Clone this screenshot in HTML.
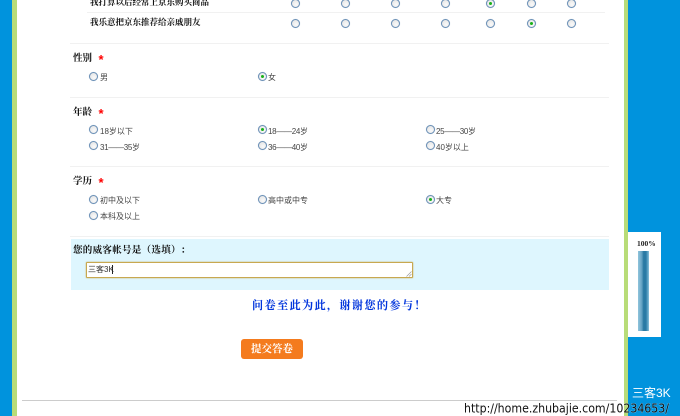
<!DOCTYPE html>
<html lang="zh"><head><meta charset="utf-8"><style>
html,body{margin:0;padding:0}
body{width:680px;height:416px;overflow:hidden;position:relative;background:#0093dd;font-family:"Liberation Serif","Noto Serif CJK SC",serif;text-spacing-trim:space-all}
div,span,i{position:absolute;display:block;white-space:nowrap}
.bl{font-family:"Noto Serif CJK SC","Liberation Serif",serif;filter:blur(.25px)}
.q{font-size:8.5px;font-weight:700;color:#111;line-height:12px;left:90px}
.h{font-size:9.5px;font-weight:700;color:#111;line-height:12px;left:73px}
.s{font-family:"Liberation Sans",sans-serif;font-size:13px;font-weight:700;color:#f00;line-height:12px;left:98.5px;filter:blur(.2px)}
.o{font-size:8px;color:#444;line-height:10px;font-family:"WenQuanYi Zen Hei","Liberation Sans",sans-serif;filter:blur(.25px)}
.d{letter-spacing:-.3px}
.l{height:1px;background:#f1f1f1}
.r{width:7px;height:7px;border:1px solid #6a8fb6;border-radius:50%;background:radial-gradient(circle at 60% 65%,#fafafa,#e0e0e0);box-shadow:0 0 .5px #6a8fb6}
.r.c:after{content:"";position:absolute;left:2px;top:2px;width:3px;height:3px;border-radius:50%;background:#18b018}
</style></head><body>
<div style="left:12px;top:0;width:4.6px;height:416px;background:#b8dc78"></div>
<div style="left:16.6px;top:0;width:607.4px;height:416px;background:#fff"></div>
<div style="left:624px;top:0;width:4px;height:416px;background:#b8dc78"></div>

<div class="q bl" style="top:-4px">我打算以后经常上京东购买商品</div>
<div class="l" style="left:87px;top:12px;width:518px"></div>
<div class="q bl" style="top:16px">我乐意把京东推荐给亲戚朋友</div>

<i class="r" style="left:291px;top:-1px"></i><i class="r" style="left:341px;top:-1px"></i><i class="r" style="left:391px;top:-1px"></i><i class="r" style="left:441px;top:-1px"></i><i class="r c" style="left:486px;top:-1px"></i><i class="r" style="left:527px;top:-1px"></i><i class="r" style="left:567px;top:-1px"></i>
<i class="r" style="left:291px;top:19px"></i><i class="r" style="left:341px;top:19px"></i><i class="r" style="left:391px;top:19px"></i><i class="r" style="left:441px;top:19px"></i><i class="r" style="left:486px;top:19px"></i><i class="r c" style="left:527px;top:19px"></i><i class="r" style="left:567px;top:19px"></i>

<div class="l" style="left:70px;top:43px;width:539px"></div>
<div class="h bl" style="top:51px">性别</div><div class="s" style="top:54px">*</div>
<i class="r" style="left:89px;top:72px"></i><span class="o" style="left:100px;top:73px">男</span>
<i class="r c" style="left:258px;top:72px"></i><span class="o" style="left:268px;top:73px">女</span>

<div class="l" style="left:70px;top:97px;width:539px"></div>
<div class="h bl" style="top:105px">年龄</div><div class="s" style="top:108px">*</div>
<i class="r" style="left:89px;top:125px"></i><span class="o" style="left:100px;top:126.5px">18岁以下</span>
<i class="r c" style="left:258px;top:125px"></i><span class="o d" style="left:268px;top:126.5px">18——24岁</span>
<i class="r" style="left:426px;top:125px"></i><span class="o d" style="left:436px;top:126.5px">25——30岁</span>
<i class="r" style="left:89px;top:141px"></i><span class="o d" style="left:100px;top:142.5px">31——35岁</span>
<i class="r" style="left:258px;top:141px"></i><span class="o d" style="left:268px;top:142.5px">36——40岁</span>
<i class="r" style="left:426px;top:141px"></i><span class="o" style="left:436px;top:142.5px">40岁以上</span>

<div class="l" style="left:70px;top:166px;width:539px"></div>
<div class="h bl" style="top:174px">学历</div><div class="s" style="top:177px">*</div>
<i class="r" style="left:89px;top:195px"></i><span class="o" style="left:100px;top:196px">初中及以下</span>
<i class="r" style="left:258px;top:195px"></i><span class="o" style="left:268px;top:196px">高中或中专</span>
<i class="r c" style="left:426px;top:195px"></i><span class="o" style="left:436px;top:196px">大专</span>
<i class="r" style="left:89px;top:211px"></i><span class="o" style="left:100px;top:212px">本科及以上</span>

<div class="l" style="left:70px;top:236px;width:539px"></div>
<div style="left:70.6px;top:239px;width:538.4px;height:51px;background:#def6fe"></div>
<div class="h bl" style="top:243px;letter-spacing:.3px">您的威客帐号是（选填）：</div>
<div style="left:86px;top:262px;width:325px;height:14px;background:#fff;border:1px solid #c8a850;box-shadow:0 0 1.5px #c8a850;border-radius:1px"></div>
<span class="o" style="left:88px;top:264.5px;color:#333">三客3K</span>
<div style="left:112px;top:265px;width:1px;height:9px;background:#222"></div>
<svg style="position:absolute;left:406px;top:271px" width="6" height="6"><path d="M5.5 .5L.5 5.5M5.5 3L3 5.5" stroke="#999" stroke-width=".7"/></svg>

<div class="bl" style="left:252px;top:298px;font-size:11.2px;font-weight:700;letter-spacing:1.3px;line-height:15px;color:#0034dc">问卷至此为此，谢谢您的参与！</div>
<div style="left:241px;top:339px;width:62px;height:20px;background:#f47b1e;border-radius:3px"></div>
<div class="bl" style="left:251px;top:342px;font-size:10.5px;font-weight:700;line-height:14px;color:#fff">提交答卷</div>

<div style="left:22px;top:400px;width:595px;height:1px;background:#ccc"></div>

<div style="left:628px;top:232px;width:33px;height:105px;background:#fff"></div>
<div class="bl" style="left:637px;top:239px;font-family:'Liberation Serif',serif;font-size:7.5px;font-weight:700;line-height:10px;color:#222">100%</div>
<div style="left:638px;top:251px;width:11px;height:80px;background:linear-gradient(90deg,#8ec4dc 0,#7cb4d0 18%,#5f9fc0 36%,#2b7aa3 50%,#2a7ba6 72%,#5ea2c4 88%,#8cc3dc 100%)"></div>

<div style="left:632px;top:386px;font-family:'WenQuanYi Zen Hei','Liberation Sans',sans-serif;font-size:12px;line-height:15px;color:#fff;filter:blur(.2px)">三客3K</div>
<svg style="position:absolute;left:0;top:0" width="680" height="416"><text x="464" y="412.5" textLength="205" lengthAdjust="spacingAndGlyphs" font-family="DejaVu Sans, sans-serif" font-size="12" fill="#111" style="paint-order:stroke;stroke:rgba(255,255,255,.35);stroke-width:1px">http://home.zhubajie.com/10234653/</text></svg>
</body></html>
